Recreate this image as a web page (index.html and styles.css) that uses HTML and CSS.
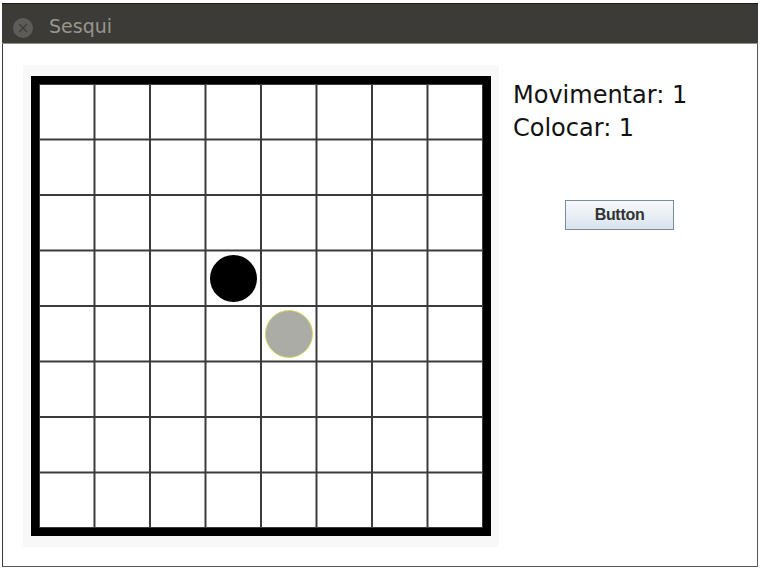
FILE: index.html
```html
<!DOCTYPE html>
<html>
<head>
<meta charset="utf-8">
<title>Sesqui</title>
<link rel="stylesheet" href="styles.css">
</head>
<body>
<div class="window">
  <div class="titlebar">
    <span class="close">×</span>
    <span class="title">Sesqui</span>
  </div>
  <div class="content">
    <div class="panel">
      <div class="board">
        <div class="piece black"></div>
        <div class="piece gray"></div>
      </div>
    </div>
    <div class="side">
      <div class="label">Movimentar: 1</div>
      <div class="label">Colocar: 1</div>
      <button class="btn">Button</button>
    </div>
  </div>
</div>
</body>
</html>
```
FILE: styles.css
```css
html, body {
  margin: 0;
  padding: 0;
  background: #ffffff;
}
body {
  padding: 3px 0 0 2px;
  font-family: "DejaVu Sans", sans-serif;
}
.window {
  width: 756px;
  height: 564px;
  box-sizing: border-box;
  border: 1px solid #5a5a5a;
  border-top: none;
  border-left-color: #3a3a3a;
  background: #ffffff;
  display: flex;
  flex-direction: column;
}
.titlebar {
  height: 39px;
  margin: 0 -1px;
  border-top: 1px solid #1e1d1b;
  border-bottom: 1px solid #8e8e8e;
  background: #3c3b37;
  display: flex;
  align-items: center;
  padding-left: 11px;
  flex-shrink: 0;
}
.close {
  width: 20px;
  height: 20px;
  border-radius: 50%;
  background: #5d5c58;
  color: #3d3c38;
  font-size: 15px;
  line-height: 20px;
  text-align: center;
  margin-top: 8px;
  font-family: "DejaVu Sans", sans-serif;
}
.title {
  margin-left: 16px;
  margin-top: 4px;
  font-size: 19px;
  line-height: 22px;
  color: #97968f;
}
.content {
  display: flex;
  align-items: flex-start;
  padding: 21px 0 0 20px;
}
.panel {
  width: 476px;
  height: 482px;
  box-sizing: border-box;
  padding: 11px 8px;
  background: #f8f8f8;
}
.board {
  width: 460px;
  height: 460px;
  box-sizing: border-box;
  border: 8px solid #000;
  background-color: #ffffff;
  background-image:
    linear-gradient(to right, #3a3a3a 0, #3a3a3a 2px, transparent 2px),
    linear-gradient(to bottom, #3a3a3a 0, #3a3a3a 2px, transparent 2px);
  background-size: 55.5px 55.5px;
  background-position: -1px -1px;
  display: grid;
  grid-template-columns: repeat(8, 1fr);
  grid-template-rows: repeat(8, 1fr);
}
.piece {
  border-radius: 50%;
  justify-self: center;
  align-self: center;
  box-sizing: border-box;
}
.black {
  grid-column: 4;
  grid-row: 4;
  width: 47px;
  height: 47px;
  background: #000;
}
.gray {
  grid-column: 5;
  grid-row: 5;
  width: 48px;
  height: 48px;
  background: #abaca6;
  border: 1px solid #d6d65c;
}
.side {
  margin-left: 14px;
  margin-top: 14px;
  display: flex;
  flex-direction: column;
  align-items: flex-start;
}
.label {
  font-size: 24px;
  line-height: 33px;
  color: #111;
}
.btn {
  margin-top: 55px;
  margin-left: 52px;
  width: 109px;
  height: 30px;
  box-sizing: border-box;
  border: 1px solid #7d8c9c;
  background: linear-gradient(to bottom, #f7f9fc 0%, #eaf0f6 45%, #d8e3ee 100%);
  font-family: "Liberation Sans", Arial, sans-serif;
  font-weight: bold;
  font-size: 16px;
  letter-spacing: -0.3px;
  color: #333;
  padding: 0;
  border-radius: 0;
}
```
